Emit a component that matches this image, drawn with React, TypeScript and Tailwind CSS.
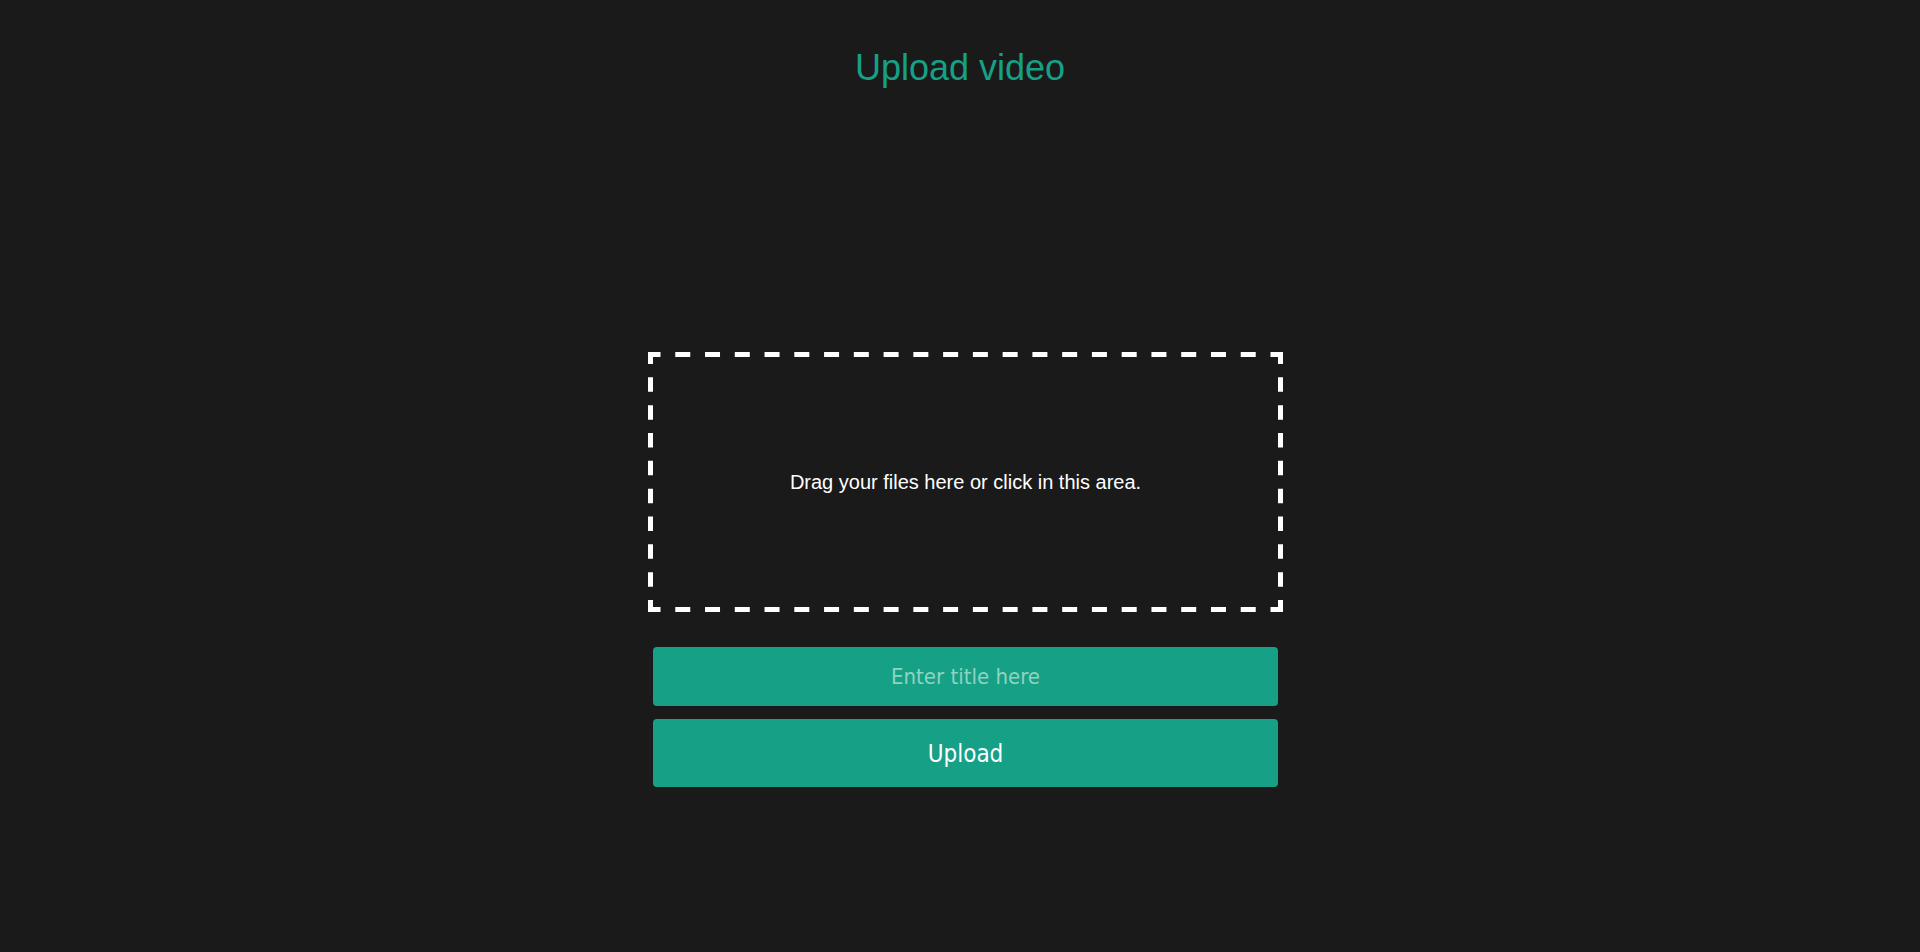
import React from 'react';

// dashed edge drawn as svg lines so the dash length matches the reference (~15px dashes, 5px thick)
function DashedFrame({ w, h }: { w: number; h: number }) {
  const edge = (len: number, d: number, a: number) => {
    const n = Math.round((len - 2 * a + d) / (d + d));
    const g = (len - 2 * a - (n - 1) * d) / n;
    return { dash: `${d} ${g}`, offset: d - a };
  };
  const hz = edge(w, 15, 12.5);
  const vt = edge(h, 14.5, 12);
  return (
    <svg className="pointer-events-none absolute inset-0" width={w} height={h} viewBox={`0 0 ${w} ${h}`}>
      <g stroke="#ffffff" strokeWidth={5} fill="none">
        <line x1={0} y1={2.5} x2={w} y2={2.5} strokeDasharray={hz.dash} strokeDashoffset={hz.offset} />
        <line x1={0} y1={h - 2.5} x2={w} y2={h - 2.5} strokeDasharray={hz.dash} strokeDashoffset={hz.offset} />
        <line x1={2.5} y1={0} x2={2.5} y2={h} strokeDasharray={vt.dash} strokeDashoffset={vt.offset} />
        <line x1={w - 2.5} y1={0} x2={w - 2.5} y2={h} strokeDasharray={vt.dash} strokeDashoffset={vt.offset} />
      </g>
    </svg>
  );
}

export default function App() {
  return (
    <div className="min-h-[952px] w-full bg-[#1a1a1a]" style={{ fontFamily: '"Liberation Sans", Arial, sans-serif' }}>
      {/* Heading */}
      <h1 className="pt-[48px] text-center text-[36px] leading-[40px] text-[#16a085]">Upload video</h1>

      {/* Upload form */}
      <div className="flex justify-center pl-[11px] pt-[264px]">
        <form className="flex w-[635px] flex-col" onSubmit={(e) => e.preventDefault()}>
          <label className="relative flex h-[260px] cursor-pointer items-center justify-center">
            <DashedFrame w={635} h={260} />
            <input type="file" multiple className="hidden" />
            <span className="text-[20px] text-white">Drag your files here or click in this area.</span>
          </label>

          <div className="mx-[5px] mt-[35px] flex flex-col gap-[13px]" style={{ fontFamily: '"DejaVu Sans Condensed", "DejaVu Sans", sans-serif' }}>
            <input
              type="text"
              placeholder="Enter title here"
              className="h-[59px] w-full rounded-[4px] bg-[#16a085] text-center text-[22px] text-white outline-none placeholder:text-[#8fd4c1]"
            />
            <button type="submit" className="h-[68px] w-full rounded-[4px] bg-[#16a085] pt-[2px] text-[24px] text-white">
              Upload
            </button>
          </div>
        </form>
      </div>
    </div>
  );
}
